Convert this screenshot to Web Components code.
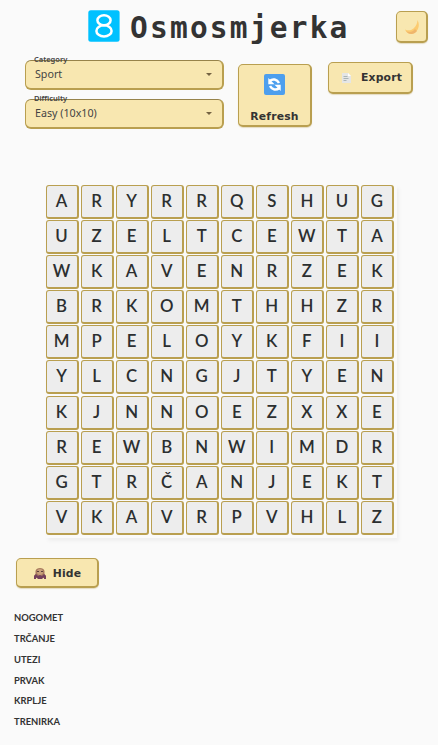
<!DOCTYPE html>
<html lang="hr">
<head>
<meta charset="utf-8">
<title>Osmosmjerka</title>
<style>
body{margin:0;background:#fafafa;color:#333;font-family:Lato,"Noto Sans",sans-serif}
</style>
</head>
<body>
<osmo-app></osmo-app>
<script>
const define=(name,css,html,setup)=>customElements.define(name,class extends HTMLElement{
  constructor(){super();this.attachShadow({mode:'open'}).innerHTML=`<style>*{box-sizing:border-box}${css}</style>${html}`}
  connectedCallback(){if(setup)setup(this,this.shadowRoot)}
});

define('osmo-title',`
:host{display:flex;align-items:flex-start;height:34px}
svg{display:block;margin-right:10px}
h1{margin:0;padding-top:1px;font:700 29.5px/34px "DejaVu Sans Mono",monospace;letter-spacing:2.2px;color:#333;white-space:nowrap}`,
`<svg width="32" height="32" viewBox="0 0 32 32"><rect x=".3" y=".2" width="31.300" height="31.500" rx="2.500" fill="#00c1ff"/><g fill="none" stroke="#fff" stroke-width="2.500"><ellipse cx="16" cy="10.300" rx="6.600" ry="5"/><ellipse cx="16" cy="20.900" rx="7.600" ry="5.600"/></g></svg><h1><slot></slot></h1>`);

define('osmo-button',`
:host{display:flex;box-sizing:border-box;align-items:center;justify-content:center;background:#f8e7b0;border:1px solid #b99f50;border-bottom-width:2px;border-right-width:2px;border-radius:5px;box-shadow:0 1px 1px #b99f5055;color:#333;font:700 10.8px/14px "DejaVu Sans",sans-serif;letter-spacing:.2px;white-space:nowrap}
:host([stacked]){flex-direction:column}`,
`<slot name="icon"></slot><slot></slot>`);

define('osmo-select',`
:host{display:flex;box-sizing:border-box;position:relative;width:199px;height:30px;align-items:center;justify-content:space-between;padding:0 10px 1px 9px;background:#f8e7b0;border:1px solid #b99f50;border-top-color:#97834a;border-width:1px 2px 2px 1px;border-radius:6px;font:400 10.7px/16px "Noto Sans",sans-serif;color:#444}
label{position:absolute;left:8px;top:-7px;font:600 7.5px/10px "Noto Sans",sans-serif;color:#444}
i{width:0;height:0;border:3px solid transparent;border-top-color:#746342;border-bottom:0}`,
`<label></label><slot></slot><i></i>`,(el,r)=>r.querySelector('label').textContent=el.getAttribute('label'));

define('letter-tile',`
:host{display:flex;box-sizing:border-box;align-items:center;justify-content:center;width:33px;height:34px;background:#ededed;border:1px solid #b99f50;border-width:1px 2px 2px 1px;border-radius:3px;font:600 16.8px/20px Lato,"Noto Sans",sans-serif;color:#2c2f30;padding-bottom:1px}`,
`<slot></slot>`);

define('letter-grid',`
:host{display:grid;grid-template-columns:repeat(10,35.06px);grid-auto-rows:35.1px;width:351px;height:353px;box-shadow:2px 3px 4px #0000000c}`,
``,(el,r)=>{
  for(const c of el.getAttribute('letters')){const t=document.createElement('letter-tile');t.textContent=c;r.append(t)}
});

define('word-list',`
:host{display:block}
ul{list-style:none;margin:0;padding:0}
li{height:20.75px;font:700 9.4px/20px Lato,"Noto Sans",sans-serif;color:#333}`,
`<ul></ul>`,(el,r)=>{
  for(const w of el.getAttribute('words').split(' ')){const li=document.createElement('li');li.textContent=w;r.querySelector('ul').append(li)}
});

define('osmo-app',`
:host{display:block;width:438px;height:745px;overflow:hidden}
header{display:grid;grid-template-columns:1fr 32px;height:60px;padding:10px 10px 0 88px;align-items:start}
.moon{width:32px;height:32px;margin-top:1px}
.controls{display:flex;align-items:flex-start;height:125px;padding-left:25px}
.selects{display:grid;gap:9px;margin-right:14px}
.refresh{width:74px;height:63px;margin:4px 16px 0 0;padding:9px 0 1px;justify-content:space-between}
.export{width:85px;height:32px;margin-top:2px;padding-top:1px}
.export svg{margin-right:7px}
letter-grid{margin-left:45.5px}
.hide{width:83px;height:30px;margin:20px 0 20.3px 16px;padding-top:2px}
.hide svg{margin-right:6px}
word-list{margin-left:14px}
svg{display:block}`,
`<header><osmo-title>Osmosmjerka</osmo-title>
<osmo-button class="moon"><svg slot="icon" width="16" height="16" viewBox="0 0 16 16"><path d="M13.500 1C17 7 13 15 7 15 4 15 2 13 1 10.500c3 1.500 6 1 8.500-1C12 7.500 13.300 4.500 13.500 1Z" fill="#fccb70"/><path d="M2 12c3 2 7 1 9-2l2 2c-3 4-8 4-11 0Z" fill="#efb56c"/></svg></osmo-button></header>
<section class="controls"><div class="selects"><osmo-select label="Category">Sport</osmo-select><osmo-select label="Difficulty">Easy (10x10)</osmo-select></div>
<osmo-button class="refresh" stacked><svg slot="icon" width="21" height="21" viewBox="0 0 21 21"><rect width="21" height="21" rx="2" fill="#4d9fee"/><path d="M6 6.700C8.500 4.500 13 5 15 9M15 14.300C12.500 16.500 8 16 6 12" fill="none" stroke="#fff" stroke-width="2.500"/><path d="M4.300 4v6.200h6.200ZM16.700 17v-6.200h-6.200Z" fill="#fff"/></svg>Refresh</osmo-button>
<osmo-button class="export"><svg slot="icon" width="16" height="12" viewBox="0 0 16 12"><path d="M4 1h6l3 3v7H4Z" fill="#e5e6e5"/><path d="M10 1v3h3" fill="#fff"/><path d="M5.500 4.500h4M5.500 6.500h5M5.500 8.500h3" stroke="#aab5b6"/></svg>Export</osmo-button></section>
<letter-grid letters="ARYRRQSHUGUZELTCEWTAWKAVENRZEKBRKOMTHHZRMPELOYKFIIYLCNGJTYENKJNNOEZXXEREWBNWIMDRGTRČANJEKTVKAVRPVHLZ"></letter-grid>
<osmo-button class="hide"><svg slot="icon" width="14" height="13" viewBox="0 0 14 13"><path d="M2.500 7V4C3 0 11 0 11.500 4v3l1.500 2v2H1V9Z" fill="#a7795e"/><ellipse cx="7" cy="5" rx="3" ry="3" fill="#c8a07b"/><path d="M1 9l2-2 2 2 2-1 2 1 2-2 2 2v3h-2v-2l-2 2H5L3 10v2H1Z" fill="#75405c"/><path d="M4 4.500h2M8 4.500h2" stroke="#593d3c"/></svg>Hide</osmo-button>
<word-list words="NOGOMET TRČANJE UTEZI PRVAK KRPLJE TRENIRKA"></word-list>`);
</script>
</body>
</html>
